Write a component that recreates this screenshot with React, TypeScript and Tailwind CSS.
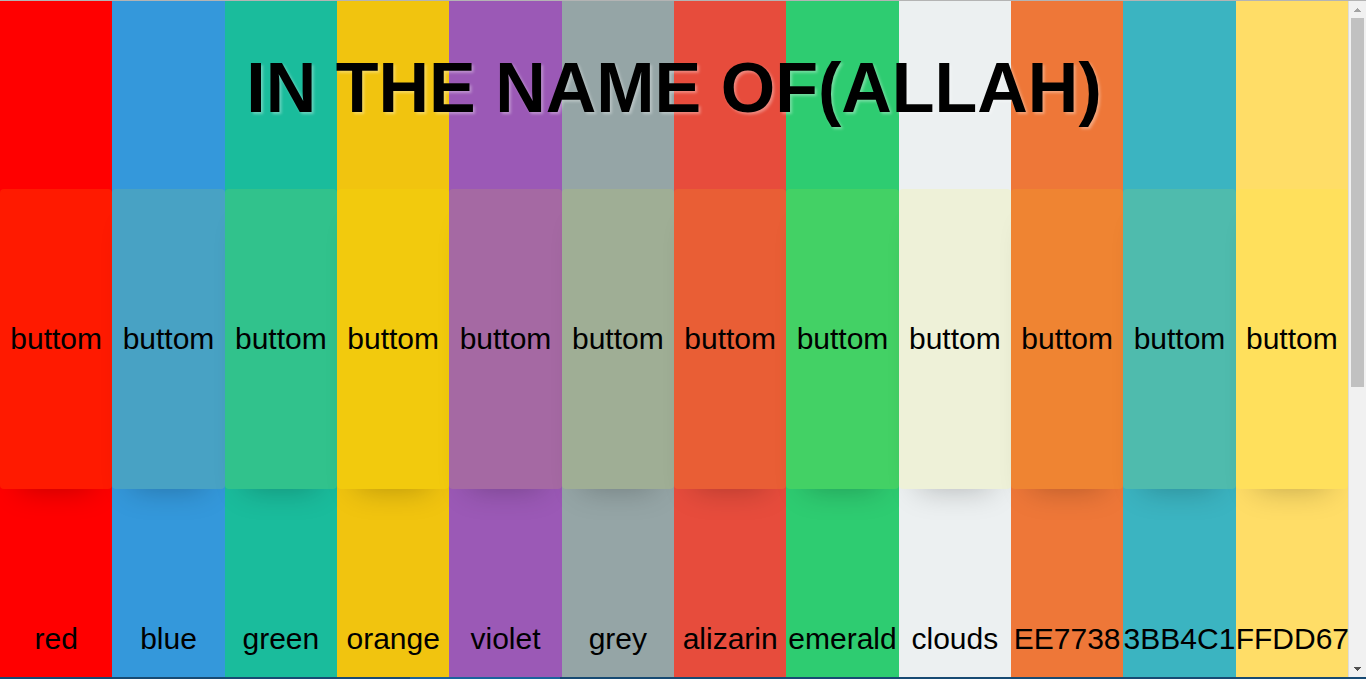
const columns = [
  { name: 'red', color: 'bg-[#ff0000]' },
  { name: 'blue', color: 'bg-[#3498db]' },
  { name: 'green', color: 'bg-[#1abc9c]' },
  { name: 'orange', color: 'bg-[#f1c40f]' },
  { name: 'violet', color: 'bg-[#9b59b6]' },
  { name: 'grey', color: 'bg-[#95a5a6]' },
  { name: 'alizarin', color: 'bg-[#e74c3c]' },
  { name: 'emerald', color: 'bg-[#2ecc71]' },
  { name: 'clouds', color: 'bg-[#ecf0f1]' },
  { name: 'EE7738', color: 'bg-[#ee7738]' },
  { name: '3BB4C1', color: 'bg-[#3bb4c1]' },
  { name: 'FFDD67', color: 'bg-[#ffdd67]' },
];

function ScrollBar() {
  return (
    <div aria-hidden="true" className="flex w-[18px] shrink-0 flex-col border-l border-[#dcdcdc] bg-[#f1f1f1]">
      <div className="flex h-[17px] shrink-0 items-center justify-center">
        <svg width="7" height="4" viewBox="0 0 7 4" shapeRendering="crispEdges">
          <path d="M3 0h1v1h1v1h1v1h1v1H0V3h1V2h1V1h1z" fill="#a3a3a3" />
        </svg>
      </div>
      <div className="flex-1 px-[2px]">
        <div className="h-[57.5%] w-[13px] bg-[#c1c1c1]" />
      </div>
      <div className="flex h-[17px] shrink-0 items-center justify-center">
        <svg width="7" height="4" viewBox="0 0 7 4" shapeRendering="crispEdges">
          <path d="M0 0h7v1H6v1H5v1H4v1H3V3H2V2H1V1H0z" fill="#505050" />
        </svg>
      </div>
    </div>
  );
}

export default function App() {
  return (
    <div className="flex h-screen flex-col overflow-hidden border-t border-[#b4b4b4] font-['Liberation_Sans',Arial,sans-serif] text-black">
      <div className="flex min-h-0 flex-1">
        <main className="relative grid min-w-0 flex-1 grid-cols-12 overflow-hidden">
          <h1 className="pointer-events-none absolute inset-x-0 top-[47px] z-10 text-center text-[70px] leading-[80px] font-bold [text-shadow:2px_2px_3px_rgba(255,255,255,0.35)]">
            IN THE NAME OF(ALLAH)
          </h1>
          {columns.map(({ name, color }) => (
            <section key={name} className={`flex min-w-0 flex-col pt-[188px] text-center text-[30px] ${color}`}>
              <button
                type="button"
                className="h-[300px] w-full shrink-0 rounded-[4px] bg-[rgba(255,255,0,0.1)] leading-[300px] shadow-[0_20px_30px_-20px_rgba(0,0,0,0.25)]"
              >
                buttom
              </button>
              <p className="h-[300px] shrink-0 leading-[300px] whitespace-nowrap">{name}</p>
            </section>
          ))}
        </main>
        <ScrollBar />
      </div>
      <div className="flex h-[2px] shrink-0 bg-[#174a73]">
        <div className="ml-[30%] w-[11%] bg-[#1b639c]" />
      </div>
    </div>
  );
}
